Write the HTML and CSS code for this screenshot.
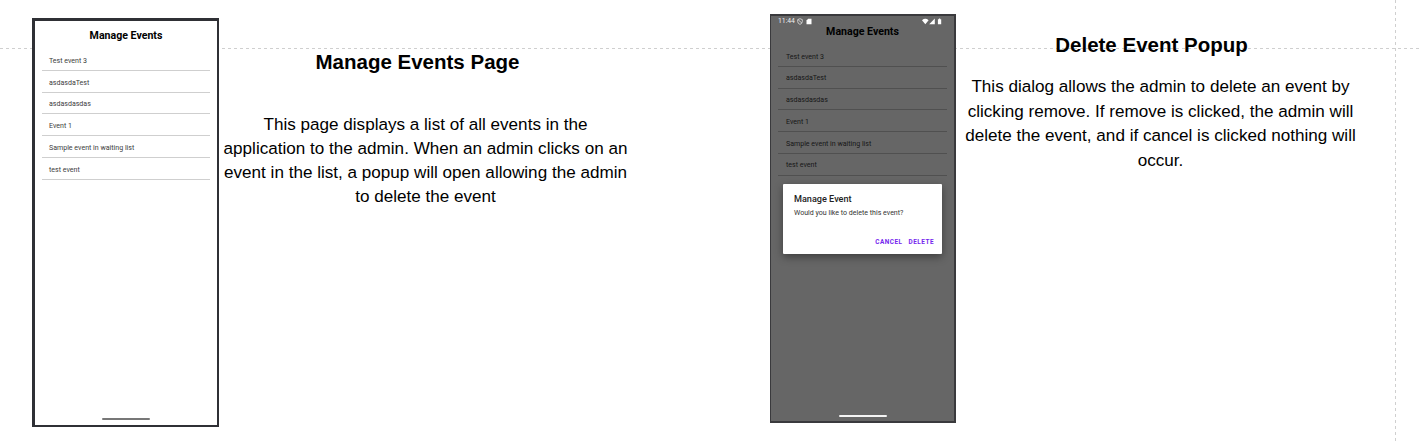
FILE: index.html
```html
<!DOCTYPE html>
<html lang="en">
<head>
<meta charset="utf-8">
<title>Event screens</title>
<link rel="stylesheet" href="styles.css">
</head>
<body>
<main class="canvas">
  <div class="guide guide-h"></div>
  <div class="guide guide-v"></div>

  <section class="phone phone-list">
    <h2 class="screen-title">Manage Events</h2>
    <ul class="events">
      <li><span>Test event 3</span></li><li><span>asdasdaTest</span></li><li><span>asdasdasdas</span></li><li><span>Event 1</span></li><li><span>Sample event in waiting list</span></li><li><span>test event</span></li>
    </ul>
    <div class="home-bar"></div>
  </section>

  <h1 class="heading heading-list">Manage Events Page</h1>
  <p class="note note-list">This page displays a list of all events in the<br>application to the admin. When an admin clicks on an<br>event in the list, a popup will open allowing the admin<br>to delete the event</p>

  <section class="phone phone-popup">
    <div class="status">
      <span class="clock">11:44</span>
      <svg class="shield" viewBox="0 0 6 7"><path d="M3 .7 5.3 1.6V3.5Q5.3 5.5 3 6.4Q.7 5.5.7 3.5V1.6ZM1.2 1.8 4.8 5" fill="none" stroke="#e4e4e4" stroke-width=".8"/></svg>
      <svg class="card" viewBox="0 0 6 7"><path d="M2.2.8H5.5V6.3H.5V2.5Z" fill="#fff"/></svg>
      <svg class="signals" viewBox="0 0 20 7"><path d="M0 2.2Q3.3-.5 6.6 2.2L3.3 6.3ZM12.8.6V6.3H7.2ZM15.9 1.2H16.9V.5H18.2V1.2H19.2V6.3H15.9Z" fill="#fff"/></svg>
    </div>
    <h2 class="screen-title">Manage Events</h2>
    <ul class="events">
      <li><span>Test event 3</span></li><li><span>asdasdaTest</span></li><li><span>asdasdasdas</span></li><li><span>Event 1</span></li><li><span>Sample event in waiting list</span></li><li><span>test event</span></li>
    </ul>
    <div class="home-bar"></div>
    <div class="dialog">
      <h3 class="dialog-title">Manage Event</h3>
      <p class="dialog-text">Would you like to delete this event?</p>
      <div class="actions"><span>CANCEL</span><span>DELETE</span></div>
    </div>
  </section>

  <h1 class="heading heading-popup">Delete Event Popup</h1>
  <p class="note note-popup">This dialog allows the admin to delete an event by<br>clicking remove. If remove is clicked, the admin will<br>delete the event, and if cancel is clicked nothing will<br>occur.</p>
</main>
</body>
</html>
```
FILE: styles.css
```css
* { box-sizing: border-box; }
body { margin: 0; background: #fff; }
h1, h2, h3, p, ul { margin: 0; padding: 0; }

.canvas {
  position: relative;
  width: 1420px;
  height: 444px;
  overflow: hidden;
  font-family: "Liberation Sans", Arial, sans-serif;
  color: #000;
}

/* page boundaries of the diagram canvas */
.guide { position: absolute; }
.guide-h {
  left: 0; top: 48px; width: 1420px; height: 1px;
  background: repeating-linear-gradient(90deg, #cfcfcf 0 3px, #fff 3px 6px);
}
.guide-v {
  left: 1395px; top: 0; width: 1px; height: 444px;
  background: repeating-linear-gradient(180deg, #cfcfcf 0 3px, #fff 3px 6px);
}

/* phone screens */
.phone {
  position: absolute;
  display: flex;
  flex-direction: column;
  font-family: Roboto, sans-serif;
}
.phone-list {
  left: 32px; top: 18px; width: 187px; height: 409px;
  padding: 9px 7px 0;
  background: #fff;
  border: 3px solid #2f3035;
  border-width: 3px 2px 2px 3px;
}
.phone-popup {
  left: 770px; top: 14px; width: 186px; height: 409px;
  padding: 0 7px;
  background: #666;
  border: 2px solid #3a3a3d;
  border-width: 2px 2px 2px 1px;
}
.screen-title {
  font-size: 10.6px;
  line-height: 12px;
  font-weight: 700;
  text-align: center;
}
.phone-popup .screen-title { margin-top: 1px; }
.events { list-style: none; }
.events li {
  display: flex;
  align-items: center;
  height: 21.75px;
  padding: 1.4px 0 0 7px;
  border-bottom: 1px solid #cfcfcf;
  font-size: 7.05px;
  line-height: 9px;
  color: #3c3c3c;
  white-space: nowrap;
}
.phone-list .events { margin-top: 7.2px; }
.phone-popup .events { margin-top: 7px; }
.phone-popup .events li { border-color: #505050; color: #161616; padding-left: 8px; }
.home-bar {
  width: 48px; height: 2px;
  margin: auto auto 5px;
  border-radius: 1px;
  background: #777;
}
.phone-popup .home-bar { margin-bottom: 4px; background: #f4f4f4; }

.status {
  display: flex;
  align-items: center;
  height: 9px;
  padding-top: 2px;
  color: #eee;
}
.clock { width: 19px; font-size: 6.8px; line-height: 7px; }
.shield, .card { width: 6px; height: 7px; }
.card { margin-left: 3px; }
.signals { width: 20px; height: 7px; margin-left: auto; margin-right: 5px; }

.dialog {
  position: absolute;
  left: 12px; top: 168px; width: 159px; height: 70px;
  display: flex;
  flex-direction: column;
  padding: 9px 8px 8px 11px;
  background: #fff;
  border-radius: 1px;
  box-shadow: 0 3px 8px rgba(0, 0, 0, .4);
}
.dialog-title { font-size: 9.1px; line-height: 12px; font-weight: 500; color: #222; }
.dialog-text { margin-top: 3px; font-size: 7.05px; line-height: 9px; color: #333; white-space: nowrap; }
.actions {
  display: flex;
  justify-content: flex-end;
  gap: 6px;
  margin-top: auto;
  font-size: 6.4px;
  line-height: 8px;
  font-weight: 700;
  letter-spacing: .5px;
  color: #7425ee;
}

/* captions */
.heading {
  position: absolute;
  font-size: 20.5px;
  line-height: 24px;
  font-weight: 700;
  text-align: center;
  white-space: nowrap;
}
.heading-list { left: 297px; top: 50px; width: 241px; }
.heading-popup { left: 1031px; top: 33px; width: 241px; }
.note {
  position: absolute;
  font-size: 17.1px;
  line-height: 24px;
  text-align: center;
  white-space: nowrap;
}
.note-list { left: 220px; top: 113px; width: 411px; line-height: 23.9px; }
.note-popup { left: 955px; top: 75px; width: 411px; line-height: 24.5px; }
```
